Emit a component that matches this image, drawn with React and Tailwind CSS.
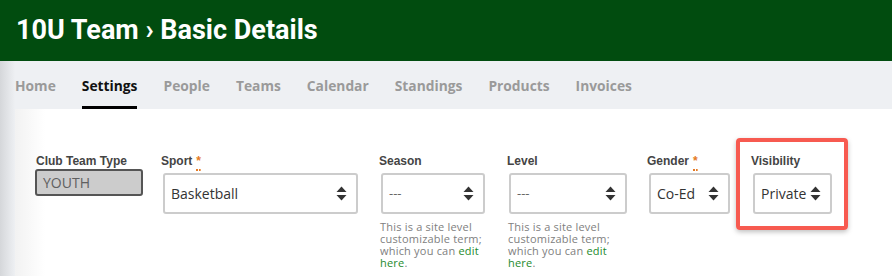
import React from 'react';

const tabs = ['Home', 'Settings', 'People', 'Teams', 'Calendar', 'Standings', 'Products', 'Invoices'];

const SelectArrows = () => (
    <svg width="11" height="15" viewBox="0 0 11 15" className="shrink-0">
        <path d="M5.5 0.5 L10.5 6 L0.5 6 Z" fill="#333" />
        <path d="M5.5 14.5 L10.5 9 L0.5 9 Z" fill="#333" />
    </svg>
);

const Label = ({ children, required }) => (
    <div className="h-[16px] pt-[2px] text-[12px] leading-[14px] font-bold text-[#444] whitespace-nowrap" style={{ fontFamily: '"Liberation Sans", Arial, sans-serif' }}>
        {children}
        {required && (
            <span className="ml-[4px] text-[#e57a24] border-b-2 border-dotted border-[#e57a24] pb-[1px]">*</span>
        )}
    </div>
);

const Select = ({ value, width, muted }) => (
    <div
        className={`mt-[5px] ml-[2px] h-[41px] ${width} flex items-center justify-between border-2 border-[#ccc] rounded-[3px] bg-white pl-[6px] pr-[9px]`}
    >
        <span className={muted ? 'text-[13px] text-[#666]' : 'text-[14px] text-[#333]'}>{value}</span>
        <SelectArrows />
    </div>
);

const HelpText = () => (
    <p className="mt-[7px] ml-[1px] text-[11px] leading-[12px] tracking-[0.2px] text-[#808080] whitespace-nowrap">
        This is a site level<br />
        customizable term;<br />
        which you can <span className="text-[#1d8a2b]">edit</span><br />
        <span className="text-[#1d8a2b]">here</span>.
    </p>
);

const App = () => {
    return (
        <div className="w-[892px] h-[276px] overflow-hidden bg-white" style={{ fontFamily: '"Open Sans", sans-serif' }}>
            {/* Page header */}
            <div className="h-[61px] bg-[#014c0f] flex items-center pl-[16px]">
                <h1 className="text-[27px] font-bold text-white leading-none" style={{ fontFamily: 'Roboto, sans-serif' }}>
                    10U Team › Basic Details
                </h1>
            </div>

            <div className="h-[215px] bg-[linear-gradient(to_right,#d5d7da,#eef0f3_15px)] pl-[15px] flex flex-col">
                {/* Tabs */}
                <nav className="h-[48px] flex gap-[26px] shrink-0">
                    {tabs.map((tab) => (
                        <div
                            key={tab}
                            className={`flex items-center pt-[6px] border-b-[3px] text-[13.8px] font-bold ${
                                tab === 'Settings' ? 'text-[#111] border-black' : 'text-[#9a9a9a] border-transparent'
                            }`}
                        >
                            {tab}
                        </div>
                    ))}
                </nav>

                {/* Panel */}
                <div className="flex-1 bg-[linear-gradient(to_right,#f2f2f2,#ffffff_30px)] pt-[29px] pl-[21px]">
                    <div className="flex items-start">
                        <div className="w-[125px] pt-[14px]">
                            <Label>Club Team Type</Label>
                            <div className="mt-[1px] -ml-[1px] w-[108px] h-[27px] bg-[#cccccc] border-2 border-[#555] rounded-[3px] pl-[6px] flex items-center text-[14px] text-[#606060]">
                                YOUTH
                            </div>
                        </div>

                        <div className="w-[218px] pt-[14px]">
                            <Label required>Sport</Label>
                            <Select value="Basketball" width="w-[195px]" />
                        </div>

                        <div className="w-[128px] pt-[14px]">
                            <Label>Season</Label>
                            <Select value="---" width="w-[104px]" muted />
                            <HelpText />
                        </div>

                        <div className="w-[140px] pt-[14px]">
                            <Label>Level</Label>
                            <Select value="---" width="w-[118px]" muted />
                            <HelpText />
                        </div>

                        <div className="w-[89px] pt-[14px]">
                            <Label required>Gender</Label>
                            <Select value="Co-Ed" width="w-[81px]" />
                        </div>

                        <div className="w-[112px] h-[92px] border-4 border-[#f75a50] rounded-[4px] shadow-[0_2px_5px_rgba(0,0,0,0.25)] pt-[10px] pl-[11px]">
                            <Label>Visibility</Label>
                            <Select value="Private" width="w-[79px]" />
                        </div>
                    </div>
                </div>
            </div>
        </div>
    );
};

export default App;
